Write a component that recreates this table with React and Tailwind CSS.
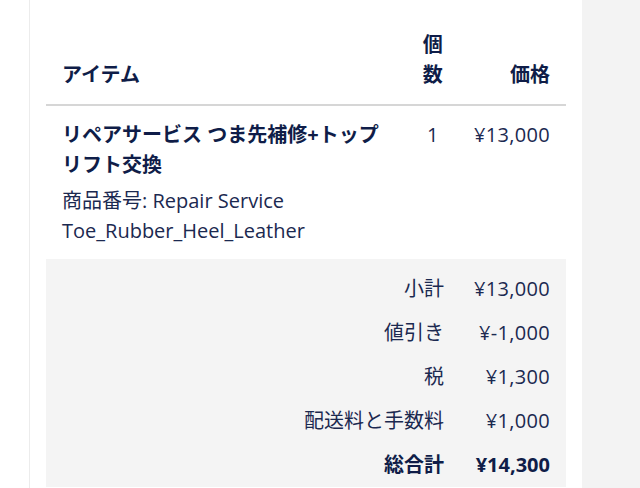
export default function App() {
  const rows = [
    ["小計", "¥13,000"],
    ["値引き", "¥-1,000"],
    ["税", "¥1,300"],
    ["配送料と手数料", "¥1,000"],
  ];
  return (
    <div className="flex h-[488px] w-[640px] overflow-hidden bg-white font-['Open_Sans','Noto_Sans_CJK_JP',sans-serif] text-[20px] leading-[30px] text-[#1b2950]">
      <div className="w-[29px] shrink-0 bg-white" />
      <div className="w-[553px] shrink-0 border-l border-[#ececec] bg-white px-4">
        <table className="w-full border-collapse">
          <thead>
            <tr className="border-b-2 border-[#d6d6d6]">
              <th className="px-4 pt-[30px] pb-[14px] text-left align-bottom font-bold text-[#0f1d48]">アイテム</th>
              <th className="pl-5 pr-3 pt-[30px] pb-[14px] text-center align-bottom font-bold text-[#0f1d48]">個数</th>
              <th className="px-4 pt-[30px] pb-[14px] text-right align-bottom font-bold text-[#0f1d48]">価格</th>
            </tr>
          </thead>
          <tbody>
            <tr>
              <td className="px-4 pt-[14px] pb-[13px] align-top">
                <div className="font-bold text-[#0f1d48]">リペアサービス つま先補修+トップリフト交換</div>
                <div className="mt-[6px]">商品番号: Repair Service Toe_Rubber_Heel_Leather</div>
              </td>
              <td className="pl-5 pr-3 pt-[14px] text-center align-top">1</td>
              <td className="px-4 pt-[14px] text-right align-top whitespace-nowrap tracking-[0.3px]">¥13,000</td>
            </tr>
          </tbody>
          <tfoot className="bg-[#f4f4f4]">
            {rows.map(([label, value], i) => (
              <tr key={label}>
                <td colSpan={2} className={(i === 0 ? "pt-[15px] " : "pt-[7px] ") + "pl-4 pr-[14px] pb-[7px] text-right"}>{label}</td>
                <td className={(i === 0 ? "pt-[15px] " : "pt-[7px] ") + "px-4 pb-[7px] text-right whitespace-nowrap tracking-[0.3px]"}>{value}</td>
              </tr>
            ))}
            <tr>
              <td colSpan={2} className="pl-4 pr-[14px] py-[7px] text-right font-bold text-[#0f1d48]">総合計</td>
              <td className="px-4 py-[7px] text-right font-bold whitespace-nowrap text-[#0f1d48]">¥14,300</td>
            </tr>
          </tfoot>
        </table>
      </div>
      <div className="flex-1 bg-[#f3f3f3]" />
    </div>
  );
}
